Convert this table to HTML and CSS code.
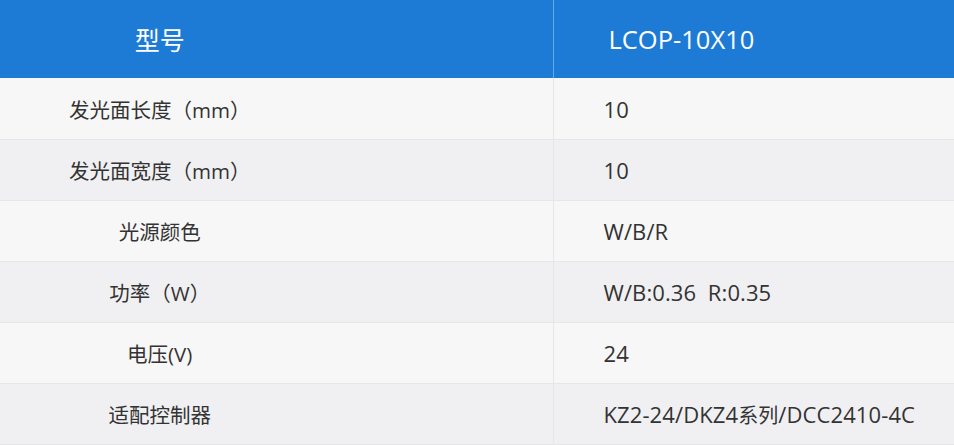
FILE: index.html
```html
<!DOCTYPE html>
<html lang="zh-CN">
<head>
<meta charset="utf-8">
<title>LCOP-10X10</title>
<link rel="stylesheet" href="styles.css">
</head>
<body>
<table class="spec">
  <thead>
    <tr class="spec-head">
      <th class="name">型号</th>
      <th class="value">LCOP-10X10</th>
    </tr>
  </thead>
  <tbody>
    <tr><td class="name">发光面长度（mm）</td><td class="value">10</td></tr>
    <tr><td class="name">发光面宽度（mm）</td><td class="value">10</td></tr>
    <tr><td class="name">光源颜色</td><td class="value">W/B/R</td></tr>
    <tr><td class="name">功率（W）</td><td class="value">W/B:0.36&nbsp;&nbsp;R:0.35</td></tr>
    <tr><td class="name">电压(V)</td><td class="value">24</td></tr>
    <tr><td class="name">适配控制器</td><td class="value">KZ2-24/DKZ4<span class="cjk">系列</span>/DCC2410-4C</td></tr>
  </tbody>
</table>
</body>
</html>
```

FILE: styles.css
```css
html, body {
  margin: 0;
  padding: 0;
  background: #ffffff;
}

body {
  font-family: "Open Sans", "Noto Sans CJK SC", sans-serif;
  color: #333333;
}

.spec {
  width: 954px;
  border-collapse: collapse;
  table-layout: fixed;
}

.spec .name {
  width: 553px;
  text-align: center;
  padding: 0 233px 0 0;
  box-sizing: border-box;
  border-right: 1px solid #e6e6e9;
}

.spec .value {
  text-align: left;
  padding: 0 0 0 50px;
}

.spec-head th {
  height: 78px;
  background: #1e7bd5;
  color: #ffffff;
  font-weight: normal;
}

.spec-head .name {
  font-size: 25px;
  border-right: 1px solid #6aa9e6;
}

.spec-head .value {
  font-size: 25.5px;
  padding-left: 55px;
}

.spec tbody td {
  height: 60px;
  border-bottom: 1px solid #e6e6e9;
}

.spec tbody tr:first-child td {
  height: 61px;
}

.spec tbody .name {
  font-size: 20.5px;
}

.spec tbody .value {
  font-size: 22px;
  letter-spacing: 0.1px;
}

.spec .cjk {
  font-size: 20px;
}

.spec tbody tr:nth-child(odd) td {
  background: #f7f7f7;
}

.spec tbody tr:nth-child(even) td {
  background: #f0f0f2;
}
```
